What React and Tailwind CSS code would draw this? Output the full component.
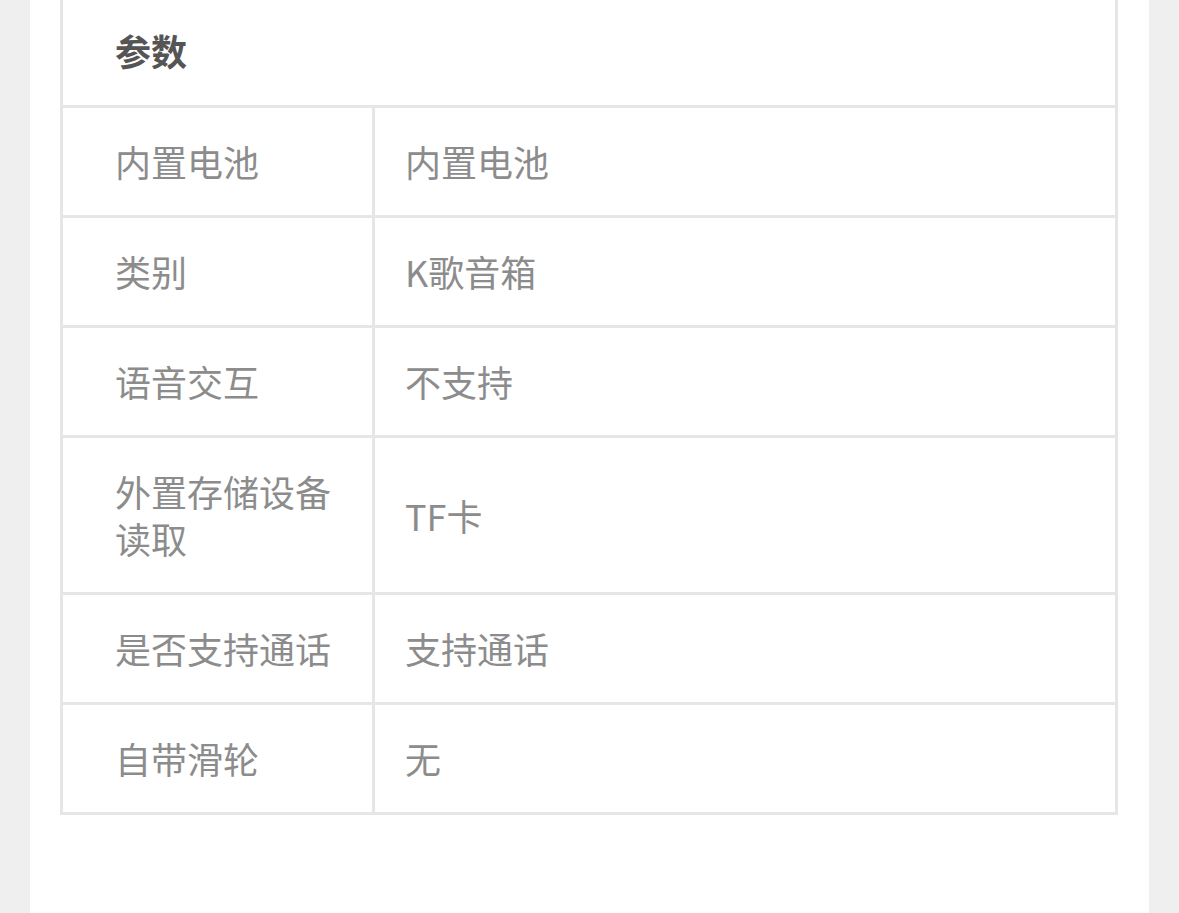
export default function App() {
  const rows = [
    ["内置电池", "内置电池"],
    ["类别", "K歌音箱"],
    ["语音交互", "不支持"],
    ["外置存储设备读取", "TF卡"],
    ["是否支持通话", "支持通话"],
    ["自带滑轮", "无"],
  ];
  return (
    <div
      className="min-h-[913px] bg-[#efefef] px-[30px]"
      style={{ fontFamily: '"Noto Sans CJK SC", "Noto Sans", sans-serif' }}
    >
      <div className="min-h-[913px] bg-white pl-[30px] pr-[31px]">
        <div className="w-[1058px] border-x-[3px] border-b-[3px] border-[#e6e6e6]">
          <div className="h-[105px] pl-[52px] pt-[27px] text-[36px] font-bold leading-[47px] text-[#555]">
            参数
          </div>
          {rows.map(([k, v]) => (
            <div key={k} className="flex border-t-[3px] border-[#e6e6e6]">
              <div className="w-[312px] shrink-0 border-r-[3px] border-[#e6e6e6] py-[30px] pl-[52px] pr-[20px] text-[36px] leading-[47px] text-[#8c8c8c]">
                {k}
              </div>
              <div className="flex flex-1 items-center py-[30px] pl-[30px] text-[36px] leading-[47px] text-[#8c8c8c]">
                {v}
              </div>
            </div>
          ))}
        </div>
      </div>
    </div>
  );
}
